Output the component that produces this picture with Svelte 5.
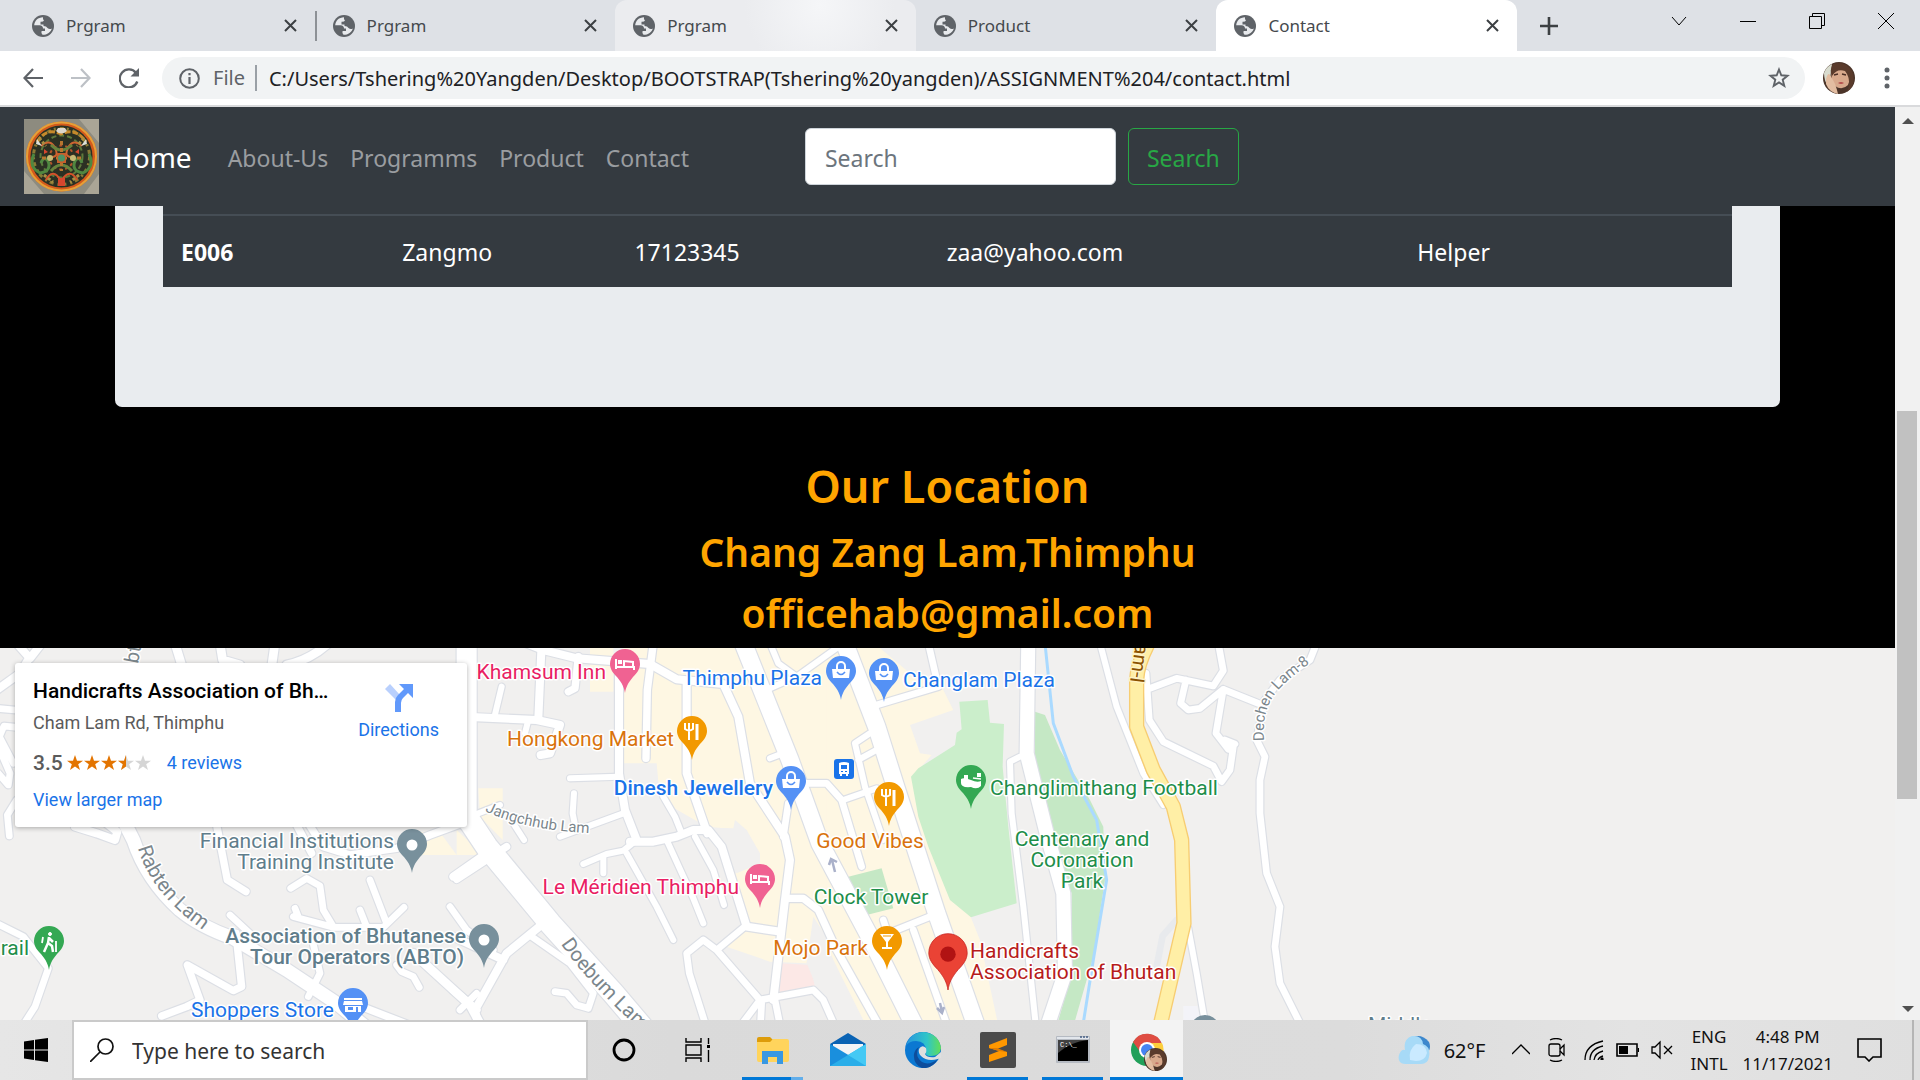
<script>
  const tabs = [
    { title: 'Prgram', state: 'first' },
    { title: 'Prgram', state: 'divided' },
    { title: 'Prgram', state: 'hover' },
    { title: 'Product', state: 'plain' },
    { title: 'Contact', state: 'active' }
  ];
  const links = ['About-Us', 'Programms', 'Product', 'Contact'];
  const stars = [1, 1, 1, 0.5, 0];

  // The map is drawn in three sheets, at three units to the pixel.
  const sheets = { a: 'translate(0 640) scale(.3333)', b: 'translate(460 640) scale(.3333)', c: 'translate(860 640) scale(.3333)' };

  const areas = [
    ['b', '#fef7e3', 'M390 24H460V155H390Z'],
    ['b', '#fef7e3', 'M490 24H1260L1330 220L1460 650L1560 900L1620 1180H1290L1060 830L1040 970L930 965L800 920L850 870L825 700L900 670L860 570L740 560L600 480L590 370H490Z'],
    ['b', '#f1f0ef', 'M825 540L860 570L900 640V670L830 700L800 620L750 565H820Z'],
    ['c', '#fef7e3', 'M-100 24H60L150 100L240 130L280 210L150 255L180 340L215 345L150 420L170 540L230 700L270 790L320 830L410 1160H-100Z'],
    ['b', '#fef7e3', 'M55 445H128V600L60 530Z'],
    ['b', '#fef7e3', 'M-140 580L-65 570L-10 645H-135Z'],
    ['b', '#fef7e3', 'M-10 570L70 645H-10Z'],
    ['b', '#fce8e6', 'M960 970L1050 975L1065 1040L955 1060Z'],
    ['b', '#f1f0ef', 'M1062 840L1140 1000L1230 1180H1120L1070 1040L1040 970Z'],
    ['c', '#cbeecb', 'M298 185L383 180L390 248L432 252L428 380L445 560L470 790L333 832L270 780L205 620L175 530L153 410L175 385L285 315L290 278L305 268Z'],
    ['c', '#c5e8c5', 'M525 215L555 225L600 330L690 480L730 560L735 720L700 950L640 1160H590L635 1000V760L590 640L560 490L525 350Z'],
    ['b', '#c5e8c5', 'M1165 710L1265 685L1300 805L1220 825L1190 770Z'],
    ['c', '#f3f3f8', 'M970 1098H1012L1025 1160H970Z']
  ];

  const roads = [
    ['a', 24, 'M50 10L90 55L125 10M90 50L60 100L-10 150'],
    ['a', 20, 'M-10 205L45 210M50 262L12 258L-2 290L40 370M-5 320L30 400L25 435L-5 400M50 480L22 525L28 588'],
    ['a', 26, 'M525 10L545 75M660 10L668 60L720 75M825 10L815 80M860 75Q930 60 985 10'],
    ['a', 40, 'M365 530L400 600Q440 720 540 810Q600 860 700 895L860 990L1010 1090L1120 1180'],
    ['a', 24, 'M225 560L290 580L345 600L352 575L320 550'],
    ['a', 22, 'M650 555L682 720L738 755'],
    ['a', 22, 'M890 555L935 640M925 550L970 620L1050 645L1190 625L1290 585L1400 545'],
    ['a', 20, 'M872 745L920 715L960 738L970 810L1000 860M690 825L760 890M880 830L1000 862L1150 862L1212 802M1110 720L1160 850M1080 810L1100 860M885 805L895 830M1350 800L1400 870L1480 930'],
    ['a', 22, 'M708 880L725 1040L700 1052L562 975L600 1080L560 1100L485 1128'],
    ['a', 20, 'M-10 850L70 890L145 985L105 1100L60 1170M935 890L960 1000L925 1070M1190 975L1205 995L1240 1010L1258 1042M1380 1110L1430 1060'],
    ['a', 26, 'M1240 940L1410 1095L1440 1150'],
    ['a', 22, 'M1060 1090L1240 1160M1370 718L1520 620'],
    ['b', 24, 'M245 10L235 235M200 10L250 30L350 55L570 72L650 118L790 132L835 230L870 430L975 590L990 660L975 780L940 1080'],
    ['b', 22, 'M355 50L345 145L325 155M580 10L562 150L558 355'],
    ['b', 24, 'M477 50V400L495 510L530 600M50 232L230 240L300 255L270 340L242 345M680 125V400L742 580'],
    ['b', 18, 'M330 415L477 410M125 140L103 232M205 240L195 280M610 470L645 530L665 580'],
    ['b', 24, 'M510 605L580 605L650 590L700 570L745 570L785 620L860 860L960 875'],
    ['b', 18, 'M500 640L590 800L640 900M620 600L700 775L730 850M705 590L760 690L792 795M530 600L490 632L440 642L370 672M430 650V700M342 460L338 520L345 555M300 590L490 520M160 550L192 600M50 522L120 495'],
    ['b', 20, 'M860 855L770 930L730 900L680 940L688 1000L745 1180M770 930L900 1080L1060 1050L1090 1080L1130 1170M900 1080L840 1160M905 1090L900 1180M945 1080L965 1180'],
    ['b', 22, 'M985 775L1030 775L1075 810L1130 930L1270 1180'],
    ['b', 18, 'M930 10L955 70L1010 110L1150 10M930 145L1020 105M1230 280L1185 310L1215 440L1270 600M1250 330L1195 360M1150 480L1250 445M930 355L990 332'],
    ['b', 20, 'M1035 430L1100 430L1145 480L1205 680M985 490L970 590M215 890L330 970L400 1060L385 1105L350 1095L320 1060L285 1055'],
    ['b', 24, 'M250 850L140 940L45 1110L60 1180M-20 890L130 960M-20 1050L50 1110M-20 710L80 640'],
    ['b', 60, 'M20 -10V540'],
    ['b', 66, 'M20 530L80 620L270 850L460 1060L570 1190'],
    ['b', 52, 'M850 10L990 360L1080 610L1240 910L1380 1190'],
    ['c', 52, 'M-50 0L50 260L110 450L230 820L360 1190'],
    ['c', 20, 'M50 195L235 140L205 10M70 840L80 870M80 882L210 830M160 870L270 1180'],
    ['c', 42, 'M505 0L500 340L560 580L610 760L615 1000L555 1180'],
    ['c', 18, 'M480 350L450 365L455 520L490 800L530 1180'],
    ['c', 18, 'M720 10L770 200L850 400L910 495'],
    ['c', 20, 'M870 145L950 115L1060 138L1090 92L1075 10M978 120L962 190L985 210L1020 205L1090 148L1195 190M1090 148L1068 280L1105 328L1125 312L1095 300M1120 320L1110 390L1085 425L1060 378L910 305L868 240L858 100'],
    ['c', 20, 'M1370 10L1350 60L1260 120L1215 180L1190 300L1215 350L1200 420V520L1220 700L1260 800L1245 920L1260 1030L1335 1180'],
    ['c', 18, 'M985 865L1010 1000L1032 1130']
  ];

  const labels = [
    ['Khamsum Inn', 606, 679, 'end', 'pink'],
    ['Thimphu Plaza', 822, 685, 'end', 'blue'],
    ['Changlam Plaza', 903, 687, 'start', 'blue'],
    ['Hongkong Market', 674, 746, 'end', 'orange'],
    ['Dinesh Jewellery', 773, 795, 'end', 'blue strong'],
    ['Good Vibes', 870, 848, 'middle', 'orange'],
    ['Le Méridien Thimphu', 739, 894, 'end', 'pink'],
    ['Clock Tower', 871, 904, 'middle', 'green'],
    ['Mojo Park', 868, 955, 'end', 'orange'],
    ['Changlimithang Football', 990, 795, 'start', 'green'],
    ['Centenary and', 1082, 846, 'middle', 'green'],
    ['Coronation', 1082, 867, 'middle', 'green'],
    ['Park', 1082, 888, 'middle', 'green'],
    ['Handicrafts', 970, 958, 'start', 'red'],
    ['Association of Bhutan', 970, 979, 'start', 'red'],
    ['Financial Institutions', 394, 848, 'end', 'slate'],
    ['Training Institute', 394, 869, 'end', 'slate'],
    ['Association of Bhutanese', 466, 943, 'end', 'slate strong'],
    ['Tour Operators (ABTO)', 464, 964, 'end', 'slate strong'],
    ['Shoppers Store', 334, 1017, 'end', 'blue'],
    ['rail', 29, 955, 'end', 'green'],
    ['Middle', 1368, 1032, 'start', 'slate']
  ];

  const pins = [
    [625, 693, '#f06292', 'bed'], [760, 908, '#f06292', 'bed'],
    [841, 700, '#5491f5', 'bag'], [884, 702, '#5491f5', 'bag'], [791, 810, '#5491f5', 'bag'],
    [692, 760, '#f29900', 'food'], [889, 826, '#f29900', 'food'], [887, 970, '#f29900', 'drink'],
    [971, 809, '#34a853', 'arena'], [49, 970, '#34a853', 'hike'],
    [412, 873, '#78909c', 'dot'], [484, 968, '#78909c', 'dot'], [1205, 1059, '#78909c', 'dot'],
    [353, 1032, '#5491f5', 'shop']
  ];
</script>

{#snippet globe()}
  <svg width="22" height="22" viewBox="0 0 22 22" aria-hidden="true">
    <circle cx="11" cy="11" r="11" fill="#5f6368" />
    <path fill="#e8eaed" d="M11 2.2C6 2.2 2.500 5.800 2.200 10.200H7.500Q11 10.600 11 13.600H13V16H9.600Q8.800 18.400 10.500 19.800C15 19.900 19 17 19.800 13.400Q17.500 14.600 15.500 13Q14.500 11 11.500 11V9.400H8.500V6.800Q11.400 7 12 5.300Q10.500 4.500 11 2.200Z" />
  </svg>
{/snippet}

{#snippet face()}
  <svg viewBox="0 0 32 32" aria-hidden="true">
    <circle cx="16" cy="16" r="16" fill="#4b3429" />
    <path d="M1 11A16 16 0 0 1 9 2L6 25Q1 20 1 11Z" fill="#d9dccf" />
    <path d="M9 8Q15 1 23 6Q29 14 25 23Q19 29 12 24Q7 17 9 8Z" fill="#d8a98c" />
    <path d="M10 2Q22-2 29 9Q34 22 24 30Q29 18 22 9Q14 6 9 14Q6 8 10 2Z" fill="#5a3b2c" />
    <path d="M3 17Q5 10 7 13L10 18Q13 23 15 32Q6 30 3 22Z" fill="#e3bda1" />
    <path d="M11 13L15 12M19 12L23 13" stroke="#4a2e25" stroke-width="1.3" />
    <path d="M15 21Q18 19 21 21Q18 23 15 21Z" fill="#b54e4d" />
  </svg>
{/snippet}

<div class="screen">
  <header class="browser">
    <div class="strip">
      <div class="tabs">
        {#each tabs as tab}
          <div class="tab {tab.state}">
            <button class="tab-title">{@render globe()}<span>{tab.title}</span></button>
            <button class="close" aria-label="Close tab">
              <svg width="13" height="13" viewBox="0 0 13 13"><path d="M1 1L12 12M12 1L1 12" stroke="#3c4043" stroke-width="2" /></svg>
            </button>
          </div>
        {/each}
      </div>
      <button class="new-tab" aria-label="New tab">
        <svg width="18" height="18" viewBox="0 0 18 18"><path d="M9 0V18M0 9H18" stroke="#3c4043" stroke-width="2.6" /></svg>
      </button>
      <div class="window-buttons">
        <button aria-label="Search tabs"><svg width="16" height="16" viewBox="0 0 16 16"><path d="M1 4L8 12L15 4" /></svg></button>
        <button aria-label="Minimize"><svg width="16" height="16" viewBox="0 0 16 16"><path d="M0 8.5H16" /></svg></button>
        <button aria-label="Restore"><svg width="16" height="16" viewBox="0 0 16 16"><path d="M.5 3.5H12.5V15.5H.5ZM3.5 3V.5H15.5V12.5H13" /></svg></button>
        <button aria-label="Close"><svg width="16" height="16" viewBox="0 0 16 16"><path d="M0 0L16 16M16 0L0 16" /></svg></button>
      </div>
    </div>
    <div class="toolbar">
      <div class="nav-buttons">
        <button aria-label="Back"><svg width="20" height="20" viewBox="0 0 20 20"><path d="M20 10H2M10 1L1.500 10L10 19" fill="none" stroke="#5f6368" stroke-width="2.2" /></svg></button>
        <button aria-label="Forward"><svg width="20" height="20" viewBox="0 0 20 20"><path d="M0 10H18M10 1L18.500 10L10 19" fill="none" stroke="#bdc1c6" stroke-width="2.2" /></svg></button>
        <button aria-label="Reload"><svg width="20" height="20" viewBox="0 0 20 20"><path d="M17 5A9 9 0 1 0 18.300 13.500" fill="none" stroke="#5f6368" stroke-width="2.300" /><path d="M20 0V8.500H11.500Z" fill="#5f6368" /></svg></button>
      </div>
      <div class="omnibox">
        <svg width="21" height="21" viewBox="0 0 21 21" aria-hidden="true"><circle cx="10.500" cy="10.500" r="9.300" fill="none" stroke="#5f6368" stroke-width="2" /><path d="M10.500 9V16M10.500 5V7.300" stroke="#5f6368" stroke-width="2.200" /></svg>
        <label class="scheme" for="address">File</label>
        <input id="address" value="C:/Users/Tshering%20Yangden/Desktop/BOOTSTRAP(Tshering%20yangden)/ASSIGNMENT%204/contact.html" />
        <button aria-label="Bookmark this page"><svg width="22" height="22" viewBox="0 0 22 22"><path d="M11 2.500L13.300 8.300L19.500 8.700L14.700 12.700L16.300 18.900L11 15.500L5.700 18.900L7.300 12.700L2.500 8.700L8.700 8.300Z" fill="none" stroke="#5f6368" stroke-width="1.900" /></svg></button>
      </div>
      <button class="avatar" aria-label="Profile">{@render face()}</button>
      <button class="more" aria-label="Menu"><svg width="6" height="22" viewBox="0 0 6 22" fill="#5f6368"><circle cx="3" cy="3" r="2.500" /><circle cx="3" cy="11" r="2.500" /><circle cx="3" cy="19" r="2.500" /></svg></button>
    </div>
  </header>

  <div class="view">
    <main>
      <nav class="navbar">
        <svg class="logo" width="75" height="75" viewBox="0 0 75 75" role="img" aria-label="Handicrafts logo">
          <rect width="75" height="75" fill="#8d8b7f" />
          <path d="M0 52L20 75H0ZM55 0H75V24ZM60 75L75 55V75Z" fill="#aaa596" />
          <ellipse cx="37.500" cy="37.500" rx="35.500" ry="35" fill="#d45a1c" />
          <ellipse cx="37.500" cy="37.500" rx="34.500" ry="34" fill="none" stroke="#e5a038" stroke-width="2" />
          <circle cx="37.500" cy="37.500" r="31" fill="#2b3023" />
          <g fill="none" stroke-width="3">
            <circle cx="37.500" cy="37.500" r="28" stroke="#8a7a35" stroke-dasharray="4 3 2 4" />
            <circle cx="37.500" cy="37.500" r="21" stroke="#5d7a3c" stroke-width="2" stroke-dasharray="5 3" />
            <circle cx="37.500" cy="38.500" r="12" stroke="#b5552b" stroke-width="2" stroke-dasharray="3 3" />
            <path d="M13 23Q22 8 37 15Q52 8 62 23" stroke="#c6892b" stroke-dasharray="6 2" />
            <path d="M10 35Q4 48 16 54Q28 52 24 42Q20 36 17 44M65 35Q71 48 59 54Q47 52 51 42Q55 36 58 44" stroke="#4f8740" />
            <path d="M17 27Q26 19 31 29T25 38M58 27Q49 19 44 29T50 38" stroke="#cf6330" stroke-width="2" />
            <path d="M22 61Q29 48 37 62Q46 48 53 61" stroke="#d4522a" stroke-width="2" />
            <path d="M27 52Q37 40 48 52M27 26Q37 36 48 26" stroke="#66843d" />
            <path d="M18 39H57M37.500 22V52" stroke="#b8762f" stroke-dasharray="4 3" />
            <path d="M15 19L22 27M60 19L53 27M20 56L29 63M55 56L46 63" stroke="#a98e42" stroke-dasharray="3 2" />
          </g>
          <path d="M33 34H42V44H33Z" fill="#c85f2c" /><circle cx="37.500" cy="39" r="3.500" fill="#4d9466" />
          <path d="M32 12Q37 17 43 12L41 9H34Z" fill="#ddd7cc" />
          <path d="M13 20L18 27L12 25ZM62 20L57 27L63 25Z" fill="#dde0d8" />
          <path d="M20 30L24 33L20 35ZM55 30L51 33L55 35ZM34 59H41V67H34Z" fill="#d6462e" />
          <circle cx="26" cy="39" r="3" fill="#c6ba75" /><circle cx="49" cy="39" r="3" fill="#c6ba75" />
        </svg>
        <a class="brand" href="#home">Home</a>
        <div class="links">
          {#each links as link}<a href="#{link}">{link}</a>{/each}
        </div>
        <form class="search">
          <input type="search" placeholder="Search" aria-label="Search" />
          <button type="button">Search</button>
        </form>
      </nav>

      <section class="staff">
        <div class="panel">
          <div class="table-wrap">
            <table>
              <colgroup><col class="c1" /><col class="c2" /><col class="c3" /><col class="c4" /><col class="c5" /></colgroup>
              <tbody>
                <tr><th scope="row">E006</th><td>Zangmo</td><td>17123345</td><td>zaa@yahoo.com</td><td>Helper</td></tr>
              </tbody>
            </table>
          </div>
        </div>
      </section>

      <section class="location">
        <h1>Our Location</h1>
        <h2>Chang Zang Lam,Thimphu</h2>
        <h2>officehab@gmail.com</h2>
      </section>

      <section class="map" aria-label="Map">
        <svg class="canvas" viewBox="0 648 1895 372" preserveAspectRatio="xMinYMin slice">
          <defs>
            <path id="pin" d="M0 0C-1-6-3-10-8-16C-12-20-15-24-15-29A15 15 0 0 1 15-29C15-24 12-20 8-16C3-10 1-6 0 0Z" />
            <path id="rabten" d="M138 848Q152 898 215 938" />
            <path id="jangchhub" d="M485 811Q535 836 640 834" />
            <path id="doebum" d="M561 944Q592 990 670 1056" />
            <path id="dechen" d="M1264 741C1261 692 1282 684 1345 638" />
            <g id="bed" fill="none" stroke="#fff" stroke-width="2"><path d="M-9-34V-24M-9-26H9V-23M-4-30H-6V-32H-4ZM-1-27V-32L8-31V-26" /></g>
            <g id="bag"><path d="M-9-31H9L8-22H-8Z" fill="#fff" /><path d="M-4-31V-34A4 4 0 0 1 4-34V-31" fill="none" stroke="#fff" stroke-width="2" /><path d="M-4-28Q0-23 4-28" fill="none" stroke="#5491f5" stroke-width="1.600" /></g>
            <g id="food" fill="none" stroke="#fff" stroke-width="2"><path d="M-3-37V-20M-7-37V-31Q-3-28 1-31V-37" /><path d="M5-20V-36" stroke-width="3" /></g>
            <g id="drink"><path d="M-7-36H7L1-28V-23H5V-21H-5V-23H-1V-28Z" fill="#fff" /><path d="M-4-34H4" stroke="#f29900" /></g>
            <g id="arena" fill="#fff"><path d="M-10-30Q-7-32 0-29Q6-26 10-28V-23Q6-19 0-22Q-10-21-10-26Z" /><path d="M-7-34H-3V-30H-7ZM6-36H10V-32H6Z" /><path d="M2-31L10-30" stroke="#fff" stroke-width="1.500" /></g>
            <g id="hike" fill="none" stroke="#fff" stroke-width="2.500"><circle cx="1" cy="-36" r="1.500" fill="#fff" stroke-width="1" /><path d="M0-33L-1-27L-5-18M-1-27L3-24L4-18M0-32L4-28" /><path d="M-6-33L-7-27M7-29V-18" stroke-width="1.800" /></g>
            <g id="dot"><circle cy="-28" r="5.500" fill="#fff" /></g>
            <g id="shop"><path d="M-9-34H9V-32H-9ZM-9-31H9L10-27H-10ZM-8-26H8V-20H-8Z" fill="#fff" /><path d="M-5-25H0V-22H-5ZM3-25H5V-20H3Z" fill="#5491f5" /></g>
          </defs>
          <rect y="640" width="4000" height="1200" fill="#f1f0ef" />
          {#each areas as [sheet, fill, d]}<path transform={sheets[sheet]} {fill} {d} />{/each}
          <path class="road" transform={sheets.c} d="M555 10L580 250L640 410L710 540L740 720L700 960L665 1180" stroke="#aadaff" stroke-width="9" />
          {#each roads as [sheet, width, d]}<path class="road" transform={sheets[sheet]} {d} stroke="#dcdfe5" stroke-width={width + 7} />{/each}
          {#each roads as [sheet, width, d]}<path class="road" transform={sheets[sheet]} {d} stroke="#fff" stroke-width={width} />{/each}
          <path class="road" transform={sheets.c} d="M950 840L908 888L890 980" stroke="#e8eaed" stroke-width="20" />
          <path class="road" transform={sheets.c} d="M870 0Q832 70 830 120V260L880 390L940 500L965 600L972 850L895 1180" stroke="#f7cd72" stroke-width="46" />
          <path class="road" transform={sheets.c} d="M870 0Q832 70 830 120V260L880 390L940 500L965 600L972 850L895 1180" stroke="#ffefa6" stroke-width="38" />
          <path d="M835 872L832 860M829 865L831 859L837 862M940 1003L942 1012M937 1008L942 1013L944 1007" stroke="#aab1ca" stroke-width="2.500" fill="none" />

          {#each pins as [x, y, fill, glyph]}
            <g transform="translate({x} {y})"><use href="#pin" {fill} /><use href="#{glyph}" /></g>
          {/each}
          <g transform="translate(834 759)"><rect width="20" height="20" rx="3" fill="#1a73e8" /><path d="M5 4Q10 2 15 4V15H14V17H12V15H8V17H6V15H5Z" fill="#fff" /><path d="M7 6H13V10H7ZM7 12H9V13H7ZM11 12H13V13H11Z" fill="#1a73e8" /></g>
          <g transform="translate(948 990) scale(1.28)"><use href="#pin" fill="#ea4335" stroke="#c5221f" stroke-width=".6" /><circle cy="-28" r="6" fill="#b11313" /></g>

          {#each labels as [text, x, y, anchor, tone]}<text class="label {tone}" {x} {y} text-anchor={anchor}>{text}</text>{/each}
          <text class="street"><textPath href="#rabten">Rabten Lam</textPath></text>
          <text class="street small"><textPath href="#jangchhub">Jangchhub Lam</textPath></text>
          <text class="street"><textPath href="#doebum">Doebum Lam</textPath></text>
          <text class="street small"><textPath href="#dechen">Dechen Lam-8</textPath></text>
          <text class="street" transform="translate(138 664) rotate(-80)">bten</text>
          <text class="street brown" text-anchor="end" transform="translate(1130 682) rotate(98)">am-I</text>
        </svg>

        <div class="card">
          <div class="place">
            <h3>Handicrafts Association of Bh…</h3>
            <p class="address">Cham Lam Rd, Thimphu</p>
            <p class="rating">
              <b>3.5</b>
              <span class="stars">
                {#each stars as fill}
                  <svg width="16" height="16" viewBox="0 0 16 16" aria-hidden="true">
                    <path d="M8 0L10 5.700H16L11.200 9.300L13 15L8 11.600L3 15L4.800 9.300L0 5.700H6Z" fill={fill === 1 ? '#e37400' : '#d5d5d5'} />
                    {#if fill === 0.5}<path d="M8 0V11.600L3 15L4.800 9.300L0 5.700H6Z" fill="#e37400" />{/if}
                  </svg>
                {/each}
              </span>
              <a href="#reviews">4 reviews</a>
            </p>
            <a class="larger" href="#map">View larger map</a>
          </div>
          <a class="directions" href="#directions">
            <svg width="28" height="28" viewBox="0 0 28 28" aria-hidden="true">
              <path d="M0 5L5 0L15 11L11 16Z" fill="#b9d0fd" />
              <path d="M10 28V18Q10 14 13 11L19 5L14 0H28V14L23 9L18 14Q16 16 16 19V28Z" fill="#6199fb" />
            </svg>
            Directions
          </a>
        </div>
      </section>
    </main>

    <div class="scrollbar" aria-hidden="true">
      <svg width="12" height="6" viewBox="0 0 12 6"><path d="M6 0L12 6H0Z" fill="#505050" /></svg>
      <div class="track"><span class="above"></span><span class="thumb"></span><span class="below"></span></div>
      <svg width="12" height="6" viewBox="0 0 12 6"><path d="M6 6L12 0H0Z" fill="#505050" /></svg>
    </div>
  </div>

  <footer class="taskbar">
    <button class="start" aria-label="Start">
      <svg width="24" height="24" viewBox="0 0 24 24"><path d="M0 3.500L10 2V11.500H0ZM11 1.800L24 0V11.500H11ZM0 12.500H10V22L0 20.500ZM11 12.500H24V24L11 22.200Z" /></svg>
    </button>
    <label class="finder">
      <svg width="24" height="24" viewBox="0 0 24 24" aria-hidden="true"><circle cx="15.500" cy="8.500" r="7.500" fill="none" stroke="#111" stroke-width="1.700" /><path d="M10 14L0 24" stroke="#111" stroke-width="1.700" /></svg>
      <input type="text" placeholder="Type here to search" aria-label="Type here to search" />
    </label>
    <div class="apps">
      <button aria-label="Cortana"><svg width="24" height="24" viewBox="0 0 24 24"><circle cx="12" cy="12" r="10" fill="none" stroke="#000" stroke-width="2.800" /></svg></button>
      <button aria-label="Task view"><svg width="26" height="24" viewBox="0 0 26 24"><path d="M1 0V4H16V0M1 24V20H16V24M1 7H16V17H1ZM23.500 0V6M23.500 12V24" fill="none" stroke="#000" stroke-width="1.400" /><path d="M22 7H25V10H22Z" /></svg></button>
      <button class="running grouped" aria-label="File Explorer">
        <svg width="36" height="36" viewBox="0 0 36 36"><path d="M2 7Q2 5 4 5H15L18 8V14H2Z" fill="#dd9c0b" /><path d="M2 10H15L18 7H32Q34 7 34 9V28Q34 30 32 30H4Q2 30 2 28Z" fill="#ffd45c" /><path d="M7 19H28V32H22V25H13V32H7Z" fill="#3898e2" /></svg>
      </button>
      <button aria-label="Mail">
        <svg width="36" height="36" viewBox="0 0 36 36"><path d="M0 12L18 1L36 12L28 24H8Z" fill="#0a63b4" /><path d="M3 12H33V28H3Z" fill="#f3f4f6" /><path d="M0 12L20 24L36 34H0Z" fill="#1a8fdd" /><path d="M36 12L0 34H36Z" fill="#2aaee9" /><path d="M36 12L18 23L36 34Z" fill="#45c9f4" /></svg>
      </button>
      <button aria-label="Edge">
        <svg width="36" height="36" viewBox="0 0 36 36"><defs><linearGradient id="edge-top"><stop offset="0" stop-color="#2895de" /><stop offset=".6" stop-color="#2fc5c8" /><stop offset="1" stop-color="#62df55" /></linearGradient></defs><circle cx="18" cy="18" r="18" fill="#0b78d2" /><path d="M1 14Q5 0 19 0Q34 2 36 16Q35 25 24 24Q19 23 21 19Q21 9 11 9Q4 9 1 14Z" fill="url(#edge-top)" /><path d="M14 15Q9 24 17 30Q24 34 33 27Q27 37 17 36Q8 32 9 22Q10 17 14 15Z" fill="#0d4d9c" /><path d="M14 17Q17 12 21 16Q22 20 20 22Q22 26 30 25L36 20V26L33 27Q22 30 16 24Q13 21 14 17Z" fill="#dfdfdf" /></svg>
      </button>
      <button class="running" aria-label="Sublime Text">
        <svg width="36" height="36" viewBox="0 0 36 36"><rect width="36" height="36" rx="2" fill="#4b4b4b" /><path d="M9 13L27 6V13L17 17L27 20V24L9 30V23L19 19L9 16Z" fill="#ff9800" /><path d="M9 16L19 19L27 20L17 16Z" fill="#e27c00" /></svg>
      </button>
      <button class="running" aria-label="Command Prompt">
        <svg width="36" height="36" viewBox="0 0 36 36"><rect x="1" y="4" width="34" height="27" rx="1" fill="#b5bac2" /><path d="M2 5H34V7H2Z" fill="#e2e6ec" /><path d="M25 5H27M28 5H30M31 5H33" stroke="#445d83" stroke-width="1.500" /><path d="M3 8H33V29H3Z" /><path d="M3 8H33Q15 10 3 21Z" fill="#424242" /><text x="5" y="15" class="prompt">C:\_</text></svg>
      </button>
      <button class="running current" aria-label="Chrome">
        <svg width="34" height="34" viewBox="0 0 34 34"><circle cx="17" cy="17" r="16" fill="#21a05a" /><path d="M3 9A16 16 0 0 1 32 11H17L11 20Z" fill="#df4c42" /><path d="M17 10H32A16 16 0 0 1 18 33L24 20Z" fill="#fdcd3b" /><circle cx="17" cy="17" r="8" fill="#fff" /><circle cx="17" cy="17" r="6" fill="#4584f3" /></svg>
        <span class="badge">{@render face()}</span>
      </button>
    </div>
    <div class="tray">
      <button class="weather"><svg width="32" height="30" viewBox="0 0 32 30" aria-hidden="true"><path d="M12 4Q22-3 31 7Q34 14 28 19Z" fill="#3d88cd" /><path d="M7 29Q-1 28 1 20Q3 14 7 15Q5 4 14 1Q24 0 25 9Q33 12 31 22Q30 29 23 29Z" fill="#a7daf7" /><path d="M12 25Q10 15 18 9Q28 9 29 18Q27 26 18 26Z" fill="#caeaff" /></svg><span>62°F</span></button>
      <button class="icon" aria-label="Show hidden icons"><svg width="18" height="20" viewBox="0 0 18 20"><path d="M0 14L9 5L18 14" /></svg></button>
      <button class="icon" aria-label="Meet now"><svg width="18" height="24" viewBox="0 0 18 24"><rect x="1" y="6" width="11" height="12" rx="2" /><path d="M12 11L16 7V17L12 13M2 2Q8-1 14 2M2 22Q8 25 14 22" /></svg></button>
      <button class="icon tight" aria-label="Network"><svg width="20" height="20" viewBox="0 0 20 20"><path d="M1 20Q1 5 19 1M6 20Q6 9 19 6M10 20Q11 13 19 11M14 20Q15 17 19 16" /><circle cx="18" cy="19" r="1" fill="#000" /></svg></button>
      <button class="icon tight" aria-label="Battery"><svg width="23" height="14" viewBox="0 0 23 14"><path d="M1 1H21V13H1Z" stroke-width="1.600" /><path d="M22.500 5V9" /><path d="M3 3H12V11H3Z" fill="#000" stroke="none" /></svg></button>
      <button class="icon" aria-label="Volume muted"><svg width="22" height="20" viewBox="0 0 22 20"><path d="M1 7H4L9 2V18L4 13H1ZM13 6L21 14M21 6L13 14" /></svg></button>
      <button class="two"><span>ENG</span><span>INTL</span></button>
      <button class="two clock"><span>4:48 PM</span><span>11/17/2021</span></button>
      <button class="icon note" aria-label="Notifications"><svg width="25" height="24" viewBox="0 0 25 24"><path d="M1 1H24V19H16L12 23L8 19H1Z" stroke-width="1.600" /></svg></button>
    </div>
  </footer>
</div>

<style>
  :global(body) { margin: 0; }
  :global(*) { box-sizing: border-box; }
  .screen { min-height: 100vh; display: flex; flex-direction: column; overflow: hidden; font-family: 'Noto Sans', 'Open Sans', sans-serif; background: #000; }
  button, input { font: inherit; border: 0; padding: 0; background: none; color: inherit; }
  button { display: flex; align-items: center; justify-content: center; }
  input { min-width: 0; outline: 0; }
  svg { flex: none; display: block; }
  a { text-decoration: none; }

  .strip { height: 51px; display: flex; background: #dee1e6; }
  .tabs { flex: 1515; max-width: 1517px; display: grid; grid-template-columns: repeat(5, 1fr); padding-left: 14px; }
  .tab { display: flex; align-items: center; padding: 0 18px; position: relative; border-radius: 12px 12px 0 0; }
  .tab-title { flex: 1; justify-content: flex-start; gap: 12px; height: 100%; font-size: 17px; color: #45494d; }
  .divided::before { content: ''; position: absolute; left: 0; top: 11px; width: 2px; height: 30px; background: #8d9196; }
  .hover { background: radial-gradient(circle at 68% 10%, #f5f6f8, #ebecef 75px); }
  .active { background: #fff; }
  .new-tab { width: 64px; }
  .window-buttons { margin-left: auto; display: flex; align-items: center; height: 42px; }
  .window-buttons button { width: 69px; height: 42px; }
  .window-buttons svg { fill: none; stroke: #000; stroke-width: 1; }

  .toolbar { display: flex; align-items: center; height: 56px; background: #fff; border-bottom: 2px solid #d9dadc; padding: 0 30px 0 23px; }
  .nav-buttons { display: flex; gap: 28px; margin-right: 23px; }
  .omnibox { flex: 1; display: flex; align-items: center; height: 42px; border-radius: 21px; background: #f1f3f4; padding: 0 15px 0 17px; font-size: 20px; color: #202124; }
  .scheme { margin-left: 13px; padding-right: 10px; border-right: 2px solid #9aa0a6; color: #5f6368; line-height: 26px; }
  .omnibox input { flex: 1; margin-left: 12px; }
  .avatar { margin-left: 18px; }
  .avatar svg { width: 32px; height: 32px; }
  .more { margin-left: 29px; }

  .view { flex: 1; display: flex; background: #000; }
  main { flex: 1; min-width: 0; display: flex; flex-direction: column; }
  .navbar { display: flex; align-items: center; background: #343a40; padding: 12px 24px; }
  .brand { margin-left: 13px; font-size: 28px; color: #fff; }
  .links { display: flex; gap: 22px; margin-left: 36px; padding-top: 2px; font-size: 23px; color: #9a9da0; }
  .links a { color: inherit; }
  .search { display: flex; gap: 12px; margin: 0 auto 0 116px; font-size: 23px; }
  .search input { width: 311px; height: 57px; padding: 2px 19px 0; border: 1px solid #ced4da; border-radius: 6px; background: #fff; color: #495057; }
  .search input::placeholder { color: #6c757d; opacity: 1; }
  .search button { padding: 2px 18px 0; border: 1px solid #28a745; border-radius: 6px; color: #28a745; }

  .staff { padding: 0 115px; }
  .panel { background: #e9ecef; border-radius: 0 0 7px 7px; padding: 0 48px 120px; }
  .table-wrap { background: #343a40; padding-top: 8px; }
  table { width: 100%; border-collapse: collapse; table-layout: fixed; color: #fff; font-size: 23px; }
  th, td { height: 72px; padding: 2px 18px; border-top: 2px solid #454d55; text-align: left; }
  th { font-weight: 700; }
  .c1 { width: 14.1%; } .c2 { width: 14.8%; } .c3 { width: 19.9%; } .c4 { width: 30%; } .c5 { width: 21.2%; }

  .location { padding: 49px 20px 10px; text-align: center; color: #ffa500; }
  h1, h2 { margin: 0; font-weight: 600; }
  h1 { font-size: 45px; line-height: 60px; }
  h2 { font-size: 39px; line-height: 50px; margin-top: 11px; }

  .map { position: relative; flex: 1; min-height: 372px; overflow: hidden; background: #f1f0ef; }
  .canvas { position: absolute; inset: 0; width: 100%; height: 100%; }
  .road { fill: none; stroke-linecap: round; stroke-linejoin: round; }
  .label, .street { font-family: Roboto, sans-serif; font-size: 21px; paint-order: stroke; stroke: #fff; stroke-width: 3px; stroke-linejoin: round; }
  .street { font-size: 20px; fill: #7b868c; }
  .small { font-size: 15px; }
  .brown { fill: #8a5100; stroke: #fff3c4; }
  .strong { font-weight: 500; }
  .pink { fill: #e91e63; } .blue { fill: #1a73e8; } .orange { fill: #d9730d; }
  .green { fill: #1e8e4a; } .slate { fill: #607d8b; } .red { fill: #b71c1c; }

  .card { position: absolute; left: 15px; top: 15px; width: 452px; display: flex; justify-content: space-between; padding: 16px 28px 15px 18px; border-radius: 3px; background: #fff; box-shadow: 0 1px 5px #0000004d; font: 18px/24px Roboto, sans-serif; }
  .card h3, .card p { margin: 0; }
  .card h3 { font-size: 21px; font-weight: 500; color: #000; }
  .card a { color: #1a73e8; }
  .card .address { margin-top: 8px; color: #5b5b5b; }
  .card .rating { display: flex; align-items: center; margin: 16px 0 13px; }
  .rating b { font-size: 21px; font-weight: 500; color: #5b5b5b; }
  .stars { display: flex; gap: 1px; margin: 0 16px 0 4px; }
  .directions { display: flex; flex-direction: column; align-items: center; gap: 6px; padding-top: 5px; }

  .scrollbar { width: 25px; display: flex; flex-direction: column; align-items: center; padding: 11px 0 8px; background: #f1f1f1; }
  .track { flex: 1; align-self: stretch; display: flex; flex-direction: column; margin: 8px 3px 8px 2px; }
  .above { flex: 279; } .thumb { flex: 388; background: #c1c1c1; } .below { flex: 199; }

  .taskbar { display: flex; height: 60px; background: linear-gradient(90deg, #e6e6e6, #dadada 35%, #dcdcdc 70%, #e3e3e3 85%, #dfdfdf); color: #111; }
  .start { width: 72px; }
  .finder { width: 516px; display: flex; align-items: center; gap: 18px; padding: 0 16px; border: 2px solid #cacaca; background: #fff; font-size: 21px; }
  .finder input { flex: 1; padding-top: 2px; }
  .finder input::placeholder { color: #333; opacity: 1; }
  .apps { display: flex; }
  .apps button { width: 75px; position: relative; }
  .apps button:first-child { width: 72px; }
  .running::after { content: ''; position: absolute; left: 7px; right: 7px; bottom: 0; height: 3px; background: #0078d7; }
  .grouped::after { background: linear-gradient(90deg, #0078d7 80%, #62aeea 80%); }
  .apps .current { width: 73px; background: #f3f3f3; }
  .current::after { left: 0; right: 0; }
  .badge { position: absolute; right: 16px; bottom: 9px; width: 23px; }
  .prompt { font: 7px 'Liberation Mono', monospace; fill: #fff; }
  .tray { margin-left: auto; display: flex; align-items: center; padding-right: 6px; }
  .weather { gap: 14px; margin-right: 26px; font-size: 20px; }
  .icon { margin-right: 18px; }
  .tight { margin-right: 12px; }
  .icon svg { fill: none; stroke: #000; stroke-width: 1.3; }
  .two { flex-direction: column; justify-content: space-between; height: 54px; font-size: 17px; line-height: 27px; }
  .clock { margin: 0 24px 0 15px; }
  .note { margin: 0; padding-right: 30px; height: 60px; border-right: 2px solid #b5b5b5; }
</style>
